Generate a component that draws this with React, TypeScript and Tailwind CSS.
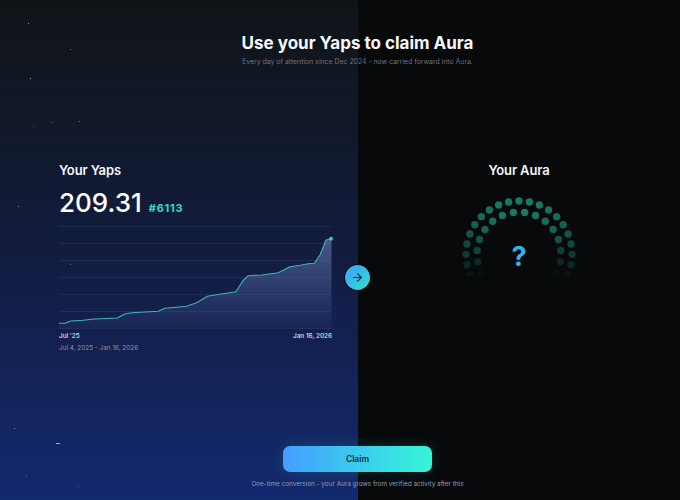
import { ArrowRight } from "lucide-react";

const chartPoints: [number, number][] = [
  [0, 97.3], [6, 97.3], [11.7, 95], [24.3, 94.3], [36, 93], [58.3, 92], [66, 88],
  [72.7, 86.7], [99.3, 85.3], [106, 82.3], [127.7, 80.3], [137.7, 76.7], [148.3, 70.3],
  [177, 65.7], [183.7, 55], [189.3, 49.7], [202.7, 49], [219.3, 46.7], [231, 40.7],
  [241, 39.3], [249.3, 37.7], [255.3, 37.3], [261, 29], [267, 14], [272.5, 12.7],
];

const stars: { x: number; y: number; o: string }[] = [
  { x: 28, y: 23, o: "bg-white/50" },
  { x: 70, y: 49, o: "bg-white/40" },
  { x: 30, y: 78, o: "bg-white/60" },
  { x: 79, y: 121, o: "bg-white/40" },
  { x: 52, y: 122, o: "bg-white/40" },
  { x: 33, y: 126, o: "bg-white/30" },
  { x: 18, y: 206, o: "bg-white/50" },
  { x: 70, y: 264, o: "bg-white/40" },
  { x: 14, y: 428, o: "bg-white/50" },
  { x: 26, y: 475, o: "bg-white/30" },
  { x: 78, y: 486, o: "bg-white/30" },
];

function YapsChart() {
  const line = chartPoints.map(([x, y]) => `${x},${y}`).join(" ");
  const area = `0,102 ${line} 272.5,102`;
  return (
    <svg width="273" height="104" viewBox="0 0 273 104" className="block overflow-visible">
      <defs>
        <linearGradient id="yapsFill" x1="0" y1="0" x2="0" y2="1">
          <stop offset="0" stopColor="#6d7fb8" stopOpacity="0.6" />
          <stop offset="1" stopColor="#5f78c8" stopOpacity="0.06" />
        </linearGradient>
      </defs>
      {[0, 17, 34, 51, 68, 85, 102].map((y) => (
        <line key={y} x1="0" x2="272" y1={y + 0.5} y2={y + 0.5} stroke="#ffffff" strokeOpacity="0.07" />
      ))}
      <polygon points={area} fill="url(#yapsFill)" />
      <polyline points={line} fill="none" stroke="#3fb5b5" strokeWidth="1.1" strokeLinejoin="round" />
      <circle cx="272" cy="12.7" r="2" fill="#2dd4bf" />
    </svg>
  );
}

function AuraDots() {
  const cx = 60;
  const cy = 58;
  const outer = Array.from({ length: 21 }, (_, i) => ({ r: 53, a: (i - 10) * 11.3 }));
  const inner = Array.from({ length: 16 }, (_, i) => ({ r: 42, a: (i - 7.5) * 15.5 }));
  return (
    <svg width="120" height="80" viewBox="0 0 120 80" className="block blur-[0.6px]">
      {[...outer, ...inner].map((d, i) => {
        const rad = (d.a * Math.PI) / 180;
        const fade = Math.min(Math.abs(d.a) / 118, 1);
        const opacity = 0.56 - 0.54 * fade * fade;
        return (
          <circle
            key={i}
            cx={cx + d.r * Math.sin(rad)}
            cy={cy - d.r * Math.cos(rad)}
            r="3.7"
            fill="#2ad0a4"
            opacity={opacity}
          />
        );
      })}
    </svg>
  );
}

export default function App() {
  return (
    <div className="relative flex h-[500px] w-[680px] overflow-hidden bg-[#07090b] font-['Inter',sans-serif] text-white">
      <section className="relative h-full w-[358px] shrink-0 bg-gradient-to-b from-[#101316] via-[#121c3f] to-[#12296f] pl-[59px] pt-[161px]">
        {stars.map((s, i) => (
          <span
            key={i}
            className={`absolute h-px w-px ${s.o}`}
            style={{ left: s.x, top: s.y }}
          />
        ))}
        <span className="absolute left-[56px] top-[443px] h-px w-[4px] bg-white/60" />

        <h2 className="text-[13px] font-semibold leading-[18px] tracking-[-0.01em] text-[#f4f6fa]">Your Yaps</h2>
        <div className="mt-[8px] flex items-baseline gap-[7px]">
          <span className="text-[26px] font-medium leading-[32px]">209.31</span>
          <span className="text-[11px] font-bold leading-none tracking-[0.7px] text-[#2fdcc0]">#6113</span>
        </div>
        <div className="mt-[7px]">
          <YapsChart />
        </div>
        <div className="mt-px flex w-[273px] justify-between text-[6.4px] font-medium leading-[10px] text-[#dfe3ee]">
          <span>Jul '25</span>
          <span>Jan 16, 2026</span>
        </div>
        <p className="mt-[2px] text-[6.4px] leading-[10px] text-[#8a95b3]">Jul 4, 2025 - Jan 16, 2026</p>
      </section>

      <section className="flex h-full flex-1 flex-col items-center pt-[161px]">
        <h2 className="text-[13px] font-semibold leading-[18px] tracking-[-0.01em] text-[#f4f6fa]">Your Aura</h2>
        <div className="mt-[17px]">
          <AuraDots />
        </div>
      </section>

      <span className="absolute left-[499px] top-[241px] w-[40px] text-center text-[27px] font-bold leading-[32px] text-[#2fb4e8]">
        ?
      </span>

      <div className="absolute left-[344px] top-[264px] flex h-[27px] w-[27px] items-center justify-center rounded-full bg-[#07090b]">
        <div className="flex h-[25px] w-[25px] items-center justify-center rounded-full bg-gradient-to-br from-[#409cff] to-[#2de0cc]">
          <ArrowRight size={13} strokeWidth={2} color="#10243a" />
        </div>
      </div>

      <header className="absolute left-0 top-[32px] w-[715px] text-center">
        <h1 className="text-[17px] font-bold leading-[22px] text-[#f7f8fa]">Use your Yaps to claim Aura</h1>
        <p className="mt-[2px] text-[6.9px] leading-[11px] text-[#6d727c]">
          Every day of attention since Dec 2024 - now carried forward into Aura.
        </p>
      </header>

      <footer className="absolute left-0 top-[446px] flex w-[715px] flex-col items-center">
        <button className="h-[26px] w-[149px] rounded-[7px] bg-gradient-to-r from-[#459dff] to-[#35f5d5] text-[8.5px] font-semibold text-[#0d2f44] shadow-[0_0_16px_rgba(53,245,213,0.15)]">
          Claim
        </button>
        <p className="mt-[7px] text-[6.4px] leading-[10px] text-[#949cb3]">
          One-time conversion - your Aura grows from verified activity after this
        </p>
      </footer>
    </div>
  );
}
